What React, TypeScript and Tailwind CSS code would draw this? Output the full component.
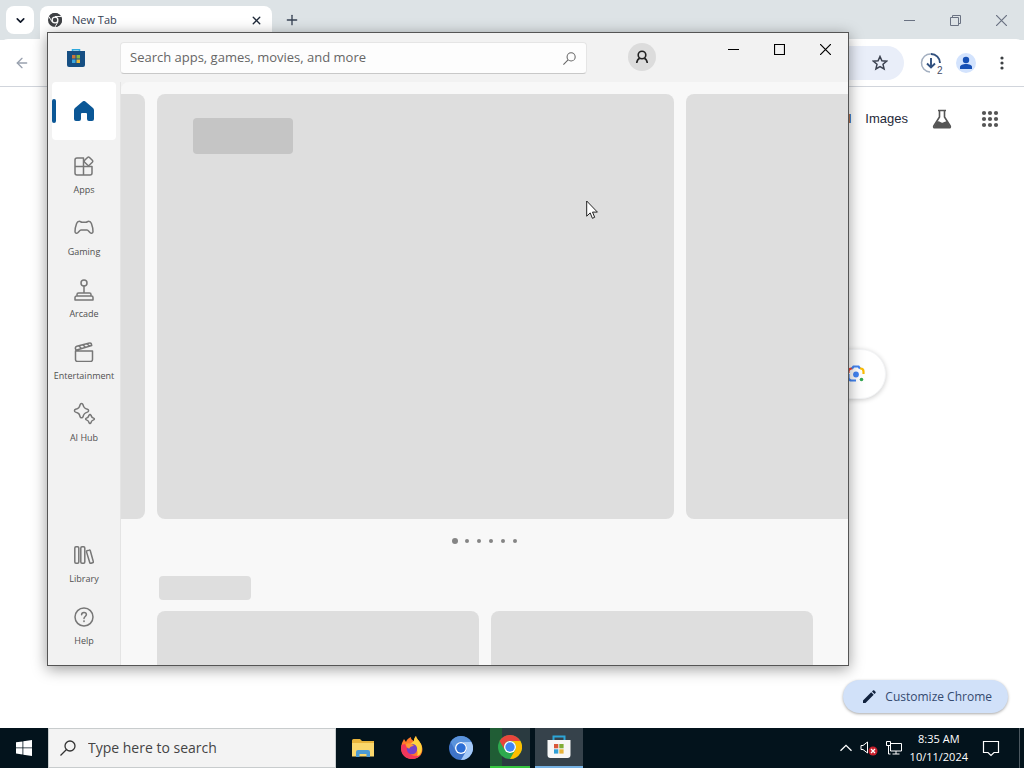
import type { ReactNode } from 'react';
import { ArrowLeft, ChevronDown, Plus, X } from 'lucide-react';

interface NavItem {
  label: string;
  icon: ReactNode;
}

const line = {
  viewBox: '0 0 20 20',
  width: 20,
  height: 20,
  fill: 'none',
  stroke: 'currentColor',
  strokeWidth: 1.5,
  strokeLinejoin: 'round' as const,
  strokeLinecap: 'round' as const,
};

const mainNav: NavItem[] = [
  {
    label: 'Apps',
    icon: (
      <svg {...line}>
        <path d="M9.500 2H3a2 2 0 0 0-2 2v13a2 2 0 0 0 2 2h13a2 2 0 0 0 2-2v-6.500H1M9.500 2v17" />
        <path d="M13.500 1.500a1.500 1.500 0 0 1 2 0l2.800 2.800a1.500 1.500 0 0 1 0 2L15.500 9a1.500 1.500 0 0 1-2 0l-2.800-2.700a1.500 1.500 0 0 1 0-2z" fill="#f2f2f2" />
      </svg>
    ),
  },
  {
    label: 'Gaming',
    icon: (
      <svg {...line}>
        <path d="M5.300 3.300c1.200 0 1.500.9 2.700.9h4c1.200 0 1.500-.9 2.700-.9 1.300 0 2.200.8 2.700 2.200.9 2.500 1.800 5.500 1.600 8-.1 1.600-1.600 2.400-2.800 1.300-1.300-1.200-2-2.900-3.200-2.900H7c-1.200 0-1.900 1.700-3.200 2.900C2.600 15.900 1.100 15.100 1 13.500c-.2-2.500.7-5.500 1.600-8 .5-1.400 1.400-2.200 2.700-2.200z" />
      </svg>
    ),
  },
  {
    label: 'Arcade',
    icon: (
      <svg {...line} height={22} viewBox="0 0 20 22">
        <circle cx="10" cy="4" r="3" />
        <path d="M10 7v7M3 17v-1.500A1.500 1.500 0 0 1 4.500 14h11a1.500 1.500 0 0 1 1.500 1.500V17M1 21v-2.500A1.500 1.500 0 0 1 2.500 17h15a1.500 1.500 0 0 1 1.500 1.500V21z" />
      </svg>
    ),
  },
  {
    label: 'Entertainment',
    icon: (
      <svg {...line}>
        <path d="M1.500 9h17v8.500a2 2 0 0 1-2 2h-13a2 2 0 0 1-2-2zM2 8.500l-.6-1.900a2 2 0 0 1 1.400-2.300L15.500 1.100a1.500 1.500 0 0 1 1.900 1.100l.3 1.300L2 8.300M5 4l2.500 2.500M9 2.900l2.500 2.400M13 1.800l2.500 2.300" />
      </svg>
    ),
  },
  {
    label: 'AI Hub',
    icon: (
      <svg {...line} viewBox="0 0 24 24" width={24} height={24}>
        <path d="M9.500 1.500c.8 0 1.300.5 1.500 1.200.8 3 1.400 3.700 4.400 4.600 1.600.5 1.600 2.300 0 2.800-3 .9-3.600 1.600-4.400 4.600-.4 1.500-2.500 1.500-2.900 0-.8-3-1.400-3.700-4.500-4.600-1.500-.5-1.500-2.300 0-2.800 3.100-.9 3.700-1.600 4.500-4.600.2-.7.700-1.200 1.400-1.200z" />
        <path d="M18 12.500c.5 0 .8.300.9.800.5 1.800.9 2.200 2.700 2.800 1 .3 1 1.500 0 1.800-1.800.6-2.200 1-2.700 2.800-.3 1-1.500 1-1.800 0-.5-1.800-.9-2.200-2.700-2.800-1-.3-1-1.500 0-1.800 1.800-.6 2.200-1 2.700-2.800.1-.5.500-.8.900-.8z" />
      </svg>
    ),
  },
];

const footerNav: NavItem[] = [
  {
    label: 'Library',
    icon: (
      <svg {...line}>
        <rect x="0.800" y="1.800" width="4" height="16.500" rx="1.200" />
        <rect x="6.800" y="1.800" width="4" height="16.500" rx="1.200" />
        <path d="M13.100 5.700l2-.6c.6-.2 1 .1 1.200.7l3 10.800c.2.600-.1 1-.7 1.200l-1.600.5c-.6.2-1.100-.1-1.200-.6l-3.300-10.800c-.1-.6 0-1 .6-1.200z" />
      </svg>
    ),
  },
  {
    label: 'Help',
    icon: (
      <svg {...line}>
        <circle cx="10" cy="10" r="9" />
        <path d="M7.600 7.800c0-1.500 1-2.400 2.400-2.400s2.400.9 2.400 2.200c0 1.700-2.400 2.100-2.400 4" />
        <circle cx="10" cy="14.200" r="0.300" fill="currentColor" />
      </svg>
    ),
  },
];

function ChromeMark({ size = 14, mono = false, blue = false }: { size?: number; mono?: boolean; blue?: boolean }) {
  const colors = mono
    ? ['#3f4145', '#3f4145', '#3f4145']
    : blue
      ? ['#5a93dc', '#3f74c8', '#a5caf8']
      : ['#e8453c', '#2da94f', '#fdbd00'];
  const center = mono ? '#3f4145' : blue ? '#2d6fd6' : '#4285f4';
  return (
    <svg width={size} height={size} viewBox="0 0 24 24">
      <circle cx="12" cy="12" r="12" fill={colors[1]} />
      <path d="M1.600 6A12 12 0 0 1 22.400 6H12a6 6 0 0 0-5.200 9z" fill={colors[0]} />
      <path d="M22.400 6A12 12 0 0 1 12 24l5.200-9A6 6 0 0 0 12 6z" fill={colors[2]} />
      <circle cx="12" cy="12" r="6" fill="#fff" />
      <circle cx="12" cy="12" r={mono ? 3.8 : 4.7} fill={center} />
      {mono && <path d="M12 6h11M6.800 15L1.600 6M17.200 15l-5.200 9" stroke="#fff" strokeWidth="1.600" fill="none" />}
    </svg>
  );
}

function WindowButtons({ restore = false }: { restore?: boolean }) {
  const button = 'flex h-8 w-[46px] items-center justify-center';
  return (
    <div className={restore ? 'flex text-gray-500' : 'flex text-black'}>
      <button aria-label="Minimize" className={button}>
        <svg width="11" height="11" stroke="currentColor"><path d="M0 5.500h11" /></svg>
      </button>
      <button aria-label={restore ? 'Restore' : 'Maximize'} className={button}>
        <svg width="11" height="11" stroke="currentColor" fill="none">
          {restore ? <path d="M.5 2.500h8v8h-8zM2.500 2.500v-2h8v8h-2" /> : <path d="M.5.500h10v10H.500z" strokeWidth="1.200" />}
        </svg>
      </button>
      <button aria-label="Close" className={button}>
        <svg width="11" height="11" stroke="currentColor" strokeWidth="1.200"><path d="M0 0l11 11M11 0L0 11" /></svg>
      </button>
    </div>
  );
}

function Magnifier({ size }: { size: number }) {
  return (
    <svg width={size} height={size} viewBox="0 0 16 16" fill="none" stroke="currentColor" strokeWidth="1.300">
      <circle cx="10" cy="6" r="5" />
      <path d="M6.500 9.500L.5 15.500" />
    </svg>
  );
}

function SideItem({ item }: { item: NavItem }) {
  return (
    <a href="#" className="flex h-[62px] flex-col items-center text-[#777]">
      <span className="mt-[7px] flex h-[22px] items-center">{item.icon}</span>
      <span className="mt-[5px] text-[9px] leading-4 text-[#505050]">{item.label}</span>
    </a>
  );
}

function Browser() {
  return (
    <div className="flex min-h-0 flex-1 flex-col bg-white">
      {/* Tab strip */}
      <div className="flex h-10 shrink-0 items-start bg-[#dde3e6]">
        <button aria-label="Search tabs" className="mt-1.5 ml-1.5 flex size-7 items-center justify-center rounded-lg bg-white text-gray-900">
          <ChevronDown size={13} strokeWidth={3} />
        </button>
        <div className="mt-1.5 ml-1.5 flex h-[34px] w-[232px] items-center rounded-t-lg bg-white px-2 pb-1.5">
          <ChromeMark mono />
          <span className="ml-2.5 flex-1 text-[11px] text-gray-700">New Tab</span>
          <button aria-label="Close tab" className="flex size-4 items-center justify-center text-gray-800">
            <X size={13} strokeWidth={2.5} />
          </button>
        </div>
        <button aria-label="New tab" className="mt-3 ml-3 text-gray-700">
          <Plus size={16} strokeWidth={2} />
        </button>
        <div className="mt-1 ml-auto">
          <WindowButtons restore />
        </div>
      </div>

      {/* Toolbar */}
      <div className="-mt-px flex h-12 shrink-0 items-center rounded-t-lg border-b border-gray-300 bg-white px-3.5">
        <button aria-label="Back" className="text-gray-400">
          <ArrowLeft size={16} />
        </button>
        <div className="ml-20 flex h-[34px] flex-1 items-center justify-end rounded-full bg-[#e9eef9] pr-4">
          <button aria-label="Bookmark this tab">
            <svg width="16" height="16" viewBox="0 0 16 16" fill="none" stroke="#3c4250" strokeWidth="1.500">
              <path d="M8 1.500l1.900 4.300 4.700.4-3.600 3.100 1.100 4.600L8 11.500l-4.100 2.400L5 9.300 1.400 6.200l4.700-.4z" />
            </svg>
          </button>
        </div>
        <button aria-label="Downloads" className="relative ml-4 size-6">
          <svg width="24" height="24" viewBox="0 0 24 24" fill="none">
            <path d="M10 21a9 9 0 1 1 1-18" stroke="#a3afc0" strokeWidth="1.500" />
            <path d="M11 3a9 9 0 0 1 9 9M11 7v9M7 12.500l4 4 4-4" stroke="#31507e" strokeWidth="1.900" />
          </svg>
          <span className="absolute top-3 left-4 bg-white px-px font-['Liberation_Sans',sans-serif] text-[10px] leading-4 text-[#444b66]">2</span>
        </button>
        <button aria-label="Profile" className="ml-3 flex size-5 items-center justify-center rounded-full bg-[#d3e3fd]">
          <svg width="14" height="14" fill="#1750b5">
            <circle cx="7" cy="4" r="3.200" />
            <path d="M1 13v-2c0-2 3-3 6-3s6 1 6 3v2z" />
          </svg>
        </button>
        <button aria-label="Menu" className="ml-[18px] flex h-5 w-4 items-center justify-center">
          <svg width="4" height="16" fill="#3c4043">
            <circle cx="2" cy="3" r="1.600" /><circle cx="2" cy="8" r="1.600" /><circle cx="2" cy="13" r="1.600" />
          </svg>
        </button>
      </div>

      {/* New tab page */}
      <div className="flex flex-1 flex-col items-center">
        <div className="mt-4 flex h-8 w-full items-center justify-end pr-6 font-['Liberation_Sans',sans-serif] text-[13px] text-gray-800">
          <a href="#">Gmail</a>
          <a href="#" className="ml-3.5">Images</a>
          <button aria-label="Labs" className="ml-6">
            <svg width="20" height="20" viewBox="0 0 20 20" fill="none" stroke="#555" strokeWidth="1.600">
              <path d="M6 1.500h8M7.500 2v6L1.800 17c-.5 1 0 1.700 1 1.700h14.400c1 0 1.500-.7 1-1.700L12.500 8V2" />
              <path d="M5 12.500c3-1 4 2 6 1l4-1.500 3 5.500-1 1.200H3L2 17.500z" fill="#555" stroke="none" />
            </svg>
          </button>
          <button aria-label="Google apps" className="ml-7">
            <svg width="20" height="20" fill="#555">
              {[4, 10, 16].map((cy) => [4, 10, 16].map((cx) => <circle key={`${cx}-${cy}`} cx={cx} cy={cy} r="2.100" />))}
            </svg>
          </button>
        </div>
        <div className="mt-[214px] flex h-[50px] w-[748px] items-center rounded-full border border-gray-100 bg-white pr-5 shadow-[0_1px_5px_rgba(0,0,0,0.2)]">
          <input aria-label="Search" className="h-full min-w-0 flex-1 rounded-full pl-6 outline-none" />
          <button aria-label="Search by image">
            <svg width="18" height="18" viewBox="0 0 18 18" fill="none" strokeWidth="2.200">
              <path d="M1.500 8V6.500A3 3 0 0 1 4.500 3.500h1" stroke="#ea4335" />
              <path d="M5 3.500l1.500-2h5l1.500 2" stroke="#4285f4" />
              <path d="M13 3.500h.5a3 3 0 0 1 3 3V9" stroke="#fbbc04" />
              <path d="M1.500 9v3.500a3 3 0 0 0 3 3H9" stroke="#4285f4" />
              <circle cx="9" cy="9.500" r="2.900" fill="#4285f4" />
              <circle cx="14.500" cy="14.500" r="1.800" fill="#34a853" />
            </svg>
          </button>
        </div>
        <button className="mt-auto mr-4 mb-[15px] flex h-[33px] items-center gap-2 self-end rounded-full bg-[#d1e1f9] pr-4 pl-[18px] text-xs text-[#344a70] shadow-[0_1px_3px_rgba(0,0,0,0.35)]">
          <svg width="16" height="16" viewBox="0 0 16 16" fill="#12233f">
            <path d="M2 11.500L10.200 3.300l2.500 2.500L4.500 14H2zM11 2.500l1-1c.4-.4.9-.4 1.300 0l1.200 1.200c.4.4.4.9 0 1.300l-1 1z" />
          </svg>
          Customize Chrome
        </button>
      </div>
    </div>
  );
}

function StoreWindow() {
  return (
    <div className="absolute top-8 left-[47px] flex h-[634px] w-[802px] flex-col border border-[#555] bg-[#f2f2f2] shadow-[0_3px_14px_rgba(0,0,0,0.4)]">
      {/* Title bar */}
      <div className="flex h-[49px] shrink-0 items-start">
        <div className="flex h-full w-[55px] items-center justify-center">
          <svg width="18" height="20" viewBox="0 0 18 20">
            <path d="M5.500 4V1.700h7V4" fill="none" stroke="#2da8dc" strokeWidth="1.500" />
            <path d="M0 3h18v14a2 2 0 0 1-2 2H2a2 2 0 0 1-2-2z" fill="#164f83" />
            <path d="M5 7h3.500v3.500H5z" fill="#c8753a" />
            <path d="M9.500 7H13v3.500H9.500z" fill="#8cb83d" />
            <path d="M5 11.500h3.500V15H5z" fill="#3ba7df" />
            <path d="M9.500 11.500H13V15H9.500z" fill="#e8b93a" />
          </svg>
        </div>
        <label className="mt-[9px] ml-[17px] flex h-8 flex-1 items-center rounded border border-[#e5e5e5] border-b-[#c8c8c8] bg-[#fdfdfd] pr-2.5 pl-[9px] text-[#666]">
          <input
            aria-label="Search apps, games, movies, and more"
            placeholder="Search apps, games, movies, and more"
            className="min-w-0 flex-1 text-[13px] outline-none placeholder:text-[#666]"
          />
          <Magnifier size={13} />
        </label>
        <button aria-label="Account" className="mt-2.5 ml-[41px] flex size-7 items-center justify-center rounded-full bg-[#dcdcdc]">
          <svg width="14" height="14" viewBox="0 0 14 14" fill="none" stroke="#222" strokeWidth="1.600">
            <circle cx="7" cy="5" r="3.800" />
            <path d="M1.700 13c.3-2.500 1.300-4 3-4.800M12.300 13c-.3-2.500-1.300-4-3-4.800" />
          </svg>
        </button>
        <div className="ml-[54px]">
          <WindowButtons />
        </div>
      </div>

      <div className="flex min-h-0 flex-1">
        {/* Sidebar */}
        <nav className="flex w-[73px] shrink-0 flex-col border-r border-[#e4e4e4] pb-1">
          <a href="#" aria-label="Home" className="mr-1 mb-2 ml-1 flex h-[58px] items-center rounded bg-white">
            <span className="h-6 w-1 rounded-full bg-[#0b5796]" />
            <svg className="ml-[18px]" width="20" height="20" viewBox="0 0 20 20" fill="#0b5796">
              <path d="M8.600.600a2 2 0 0 1 2.800 0l7.600 6.500c.6.600 1 1.200 1 2.100V18a2 2 0 0 1-2 2h-3a2 2 0 0 1-2-2v-5a1 1 0 0 0-1-1H8a1 1 0 0 0-1 1v5a2 2 0 0 1-2 2H2a2 2 0 0 1-2-2V9.200c0-.9.400-1.500 1-2.100z" />
            </svg>
          </a>
          {mainNav.map((item) => (
            <SideItem key={item.label} item={item} />
          ))}
          <div className="mt-auto">
            {footerNav.map((item) => (
              <SideItem key={item.label} item={item} />
            ))}
          </div>
        </nav>

        {/* Loading skeleton */}
        <main className="min-w-0 flex-1 overflow-hidden rounded-tl-lg bg-[#f8f8f8] pt-3">
          <div className="flex h-[425px] gap-3">
            <div className="w-6 shrink-0 rounded-r-lg bg-[#dedede]" />
            <div className="w-[517px] shrink-0 rounded-lg bg-[#dedede] px-9 pt-6">
              <div className="h-9 w-[100px] rounded bg-[#c5c5c5]" />
            </div>
            <div className="flex-1 rounded-l-lg bg-[#dedede]" />
          </div>
          <div className="flex h-11 items-center justify-center">
            {[0, 1, 2, 3, 4, 5].map((dot) => (
              <span key={dot} className="flex w-3 justify-center">
                <span className={dot === 0 ? 'size-1.5 rounded-full bg-[#858585]' : 'size-1 rounded-full bg-[#858585]'} />
              </span>
            ))}
          </div>
          <div className="pr-[35px] pl-9">
            <div className="mt-[13px] ml-0.5 h-6 w-[92px] rounded bg-[#dedede]" />
            <div className="mt-[11px] flex gap-3">
              <div className="h-40 flex-1 rounded-lg bg-[#dedede]" />
              <div className="h-40 flex-1 rounded-lg bg-[#dedede]" />
            </div>
          </div>
        </main>
      </div>
    </div>
  );
}

function Taskbar() {
  const app = 'flex h-10 w-12 items-center justify-center';
  return (
    <div className="flex h-10 shrink-0 items-center bg-[#03131c] text-white">
      <button aria-label="Start" className="flex h-full w-12 items-center justify-center">
        <svg width="16" height="16" fill="#fff">
          <path d="M0 2.300l6.500-.9v6.100H0zM7.300 1.300L16 0v7.500H7.300zM0 8.300h6.500v6.200L0 13.600zM7.300 8.300H16V16l-8.700-1.300z" />
        </svg>
      </button>
      <label className="flex h-full w-72 items-center gap-3 border border-[#c8cccd] bg-[#f3f3f3] px-[11px] text-[#333]">
        <Magnifier size={16} />
        <input
          aria-label="Type here to search"
          placeholder="Type here to search"
          className="min-w-0 flex-1 text-sm outline-none placeholder:text-[#444]"
        />
      </label>
      <div className="ml-[3px] flex gap-px">
        <button aria-label="File Explorer" className={app}>
          <svg width="22" height="19" viewBox="0 0 22 19">
            <path d="M0 1.500A1.500 1.500 0 0 1 1.500 0H8l2 2h12v15H0z" fill="#e9b43b" />
            <path d="M0 4h22v13.500H0z" fill="#fbd76c" />
            <path d="M4 18v-5a2 2 0 0 1 2-2h10a2 2 0 0 1 2 2v5h-3.500v-3h-7v3z" fill="#4d9bd3" />
          </svg>
        </button>
        <button aria-label="Firefox" className={app}>
          <svg width="24" height="24" viewBox="0 0 24 24">
            <path d="M2 7l2-4 2 3c1-3 3-4 5-5-.2 2 1 3 3 4 0-2 .5-3 2-5 .5 3 3 4 5 8 4 8-1 15-9 15S-1 16 2 7z" fill="#ff7a2a" />
            <path d="M16 0c.5 3 3 4 5 8 2.500 6-.5 11-4 13 2-6-1-11-7-13l4-3c0-2 .5-3 2-5z" fill="#ffd33d" />
            <path d="M1.500 9c-2 8 3 14 10.500 14 4 0 7-2 8.500-4-4 2-9 1-11-2L5 8z" fill="#f2375c" />
            <circle cx="12" cy="13" r="5.200" fill="#7542c8" />
            <path d="M6 8c3-2 5 0 8 1-1 2-4 1-4.500 3.500C8 13 6 11 6 8z" fill="#ff9b32" />
          </svg>
        </button>
        <button aria-label="Chromium" className={app}>
          <ChromeMark size={24} blue />
        </button>
        <button aria-label="Google Chrome" className={app}>
          <span className="flex h-full w-10 items-center justify-center border-b-2 border-[#35c63f] bg-linear-to-r from-[#205d35] from-30% to-[#2a3a40] to-30%">
            <ChromeMark size={24} />
          </span>
        </button>
        <button aria-label="Microsoft Store" className="flex h-10 w-12 items-center justify-center border-b-2 border-[#76b2e4] bg-[#36424b]">
          <svg width="24" height="24" viewBox="0 0 24 24">
            <path d="M6.500 6V1.500h11V6" fill="none" stroke="#2ca5d8" strokeWidth="2" />
            <path d="M.5 5h23v15a3 3 0 0 1-3 3h-17a3 3 0 0 1-3-3z" fill="#f7f7f7" />
            <path d="M7 9h4.300v4.300H7z" fill="#d9583a" />
            <path d="M12.300 9h4.300v4.300h-4.300z" fill="#80ad36" />
            <path d="M7 14.300h4.300v4.300H7z" fill="#2f9fd6" />
            <path d="M12.300 14.300h4.300v4.300h-4.300z" fill="#e8b33a" />
          </svg>
        </button>
      </div>

      {/* Tray */}
      <div className="ml-auto flex h-full items-center">
        <button aria-label="Show hidden icons">
          <svg width="12" height="8" fill="none" stroke="#fff" strokeWidth="1.300"><path d="M.5 6.800L6 1.300l5.500 5.500" /></svg>
        </button>
        <button aria-label="Volume muted" className="ml-2">
          <svg width="18" height="16" viewBox="0 0 18 16" fill="none" stroke="#fff">
            <path d="M1 5.500h2L7.500 2v11L3 9.500H1z" />
            <circle cx="13" cy="11" r="4.500" fill="#c8202c" stroke="none" />
            <path d="M11 9l4 4M15 9l-4 4" strokeWidth="1.300" />
          </svg>
        </button>
        <button aria-label="Network" className="ml-2">
          <svg width="16" height="14" fill="none" stroke="#fff">
            <path d="M4.500 2.500h11v7.500h-11zM10 10v3M6.500 13h7M.5.500h4v4h-4zM2.500 4.500V13h2" />
          </svg>
        </button>
        <button className="ml-2 flex flex-col items-center text-[11px] leading-[18px]">
          <span>8:35 AM</span>
          <span>10/11/2024</span>
        </button>
        <button aria-label="Notifications" className="mr-[19px] ml-3.5">
          <svg width="18" height="18" fill="none" stroke="#fff">
            <path d="M1.500 2.500h15v11H12l-3 3-3-3H1.500z" strokeWidth="1.200" />
          </svg>
        </button>
        <span className="h-full w-[5px] border-l border-[#4c5860]" />
      </div>
    </div>
  );
}

export default function App() {
  return (
    <div className="relative flex h-screen flex-col overflow-hidden font-['Open_Sans','Noto_Sans',sans-serif]">
      <Browser />
      <Taskbar />
      <StoreWindow />
      {/* Mouse pointer */}
      <svg className="pointer-events-none absolute top-[200px] left-[586px]" width="13" height="20" viewBox="0 0 13 20">
        <path d="M.7 1v15.200l3.500-3.300 2.200 5.400 2.300-1-2.200-5.200h4.900z" fill="#fff" stroke="#222" />
      </svg>
    </div>
  );
}
